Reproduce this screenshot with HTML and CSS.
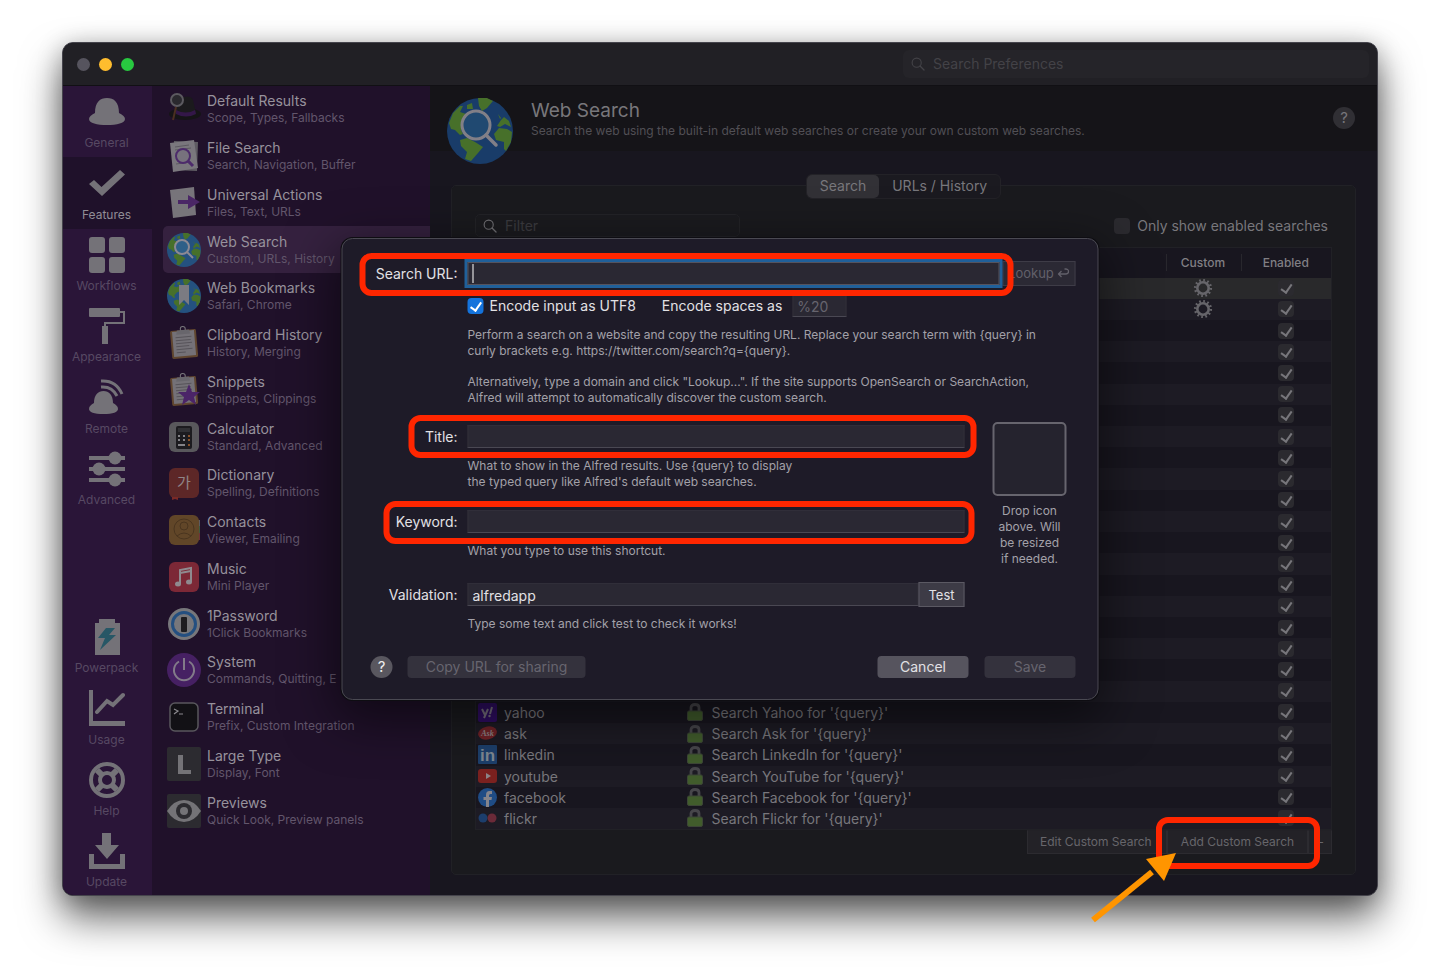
FILE: index.html
```
<!DOCTYPE html>
<html lang="en">
<head>
<meta charset="utf-8">
<meta name="viewport" content="width=device-width, initial-scale=1">
<title>Alfred Preferences</title>
<link rel="stylesheet" href="styles.css">
</head>
<body>
<svg class="sprite" aria-hidden="true">
  <symbol id="globe" viewBox="0 0 66 66">
    <circle cx="33" cy="33" r="33" fill="currentColor"/>
    <g class="land">
      <path d="M2 25 6 15l7-7 3 0-3 6 6 2 5-3 6 4-5 7-6 2-5 6 2 4-3 1-5-5-4-1z"/>
      <path d="M31 0h9l6 3-6 7-5 3-3-5zM20 7l5-2 1 6-6 0z"/>
      <path d="m13 42 7-2 8 4 8 5-5 6-7 8-6-2 2-7-6-6z"/>
      <path d="m47 36 5-6 8 1 5 3-1 10-5 9-2-2 0-7-8-2zM50 28l4-6 3-3 5 4 2 6-6-3-5 3zM51 16l3 4-1 1z"/>
    </g>
  </symbol>
  <symbol id="lens" viewBox="0 0 16 16">
    <circle cx="6.500" cy="6.500" r="5.200" fill="none" stroke="currentColor" stroke-width="1.300"/>
    <path d="m10.300 10.300 4.600 4.600" fill="none" stroke="currentColor" stroke-width="1.500" stroke-linecap="round"/>
  </symbol>
  <symbol id="gear" viewBox="0 0 20 20">
    <circle cx="10" cy="10" r="5.700" fill="none" stroke="currentColor" stroke-width="2.600"/>
    <circle cx="10" cy="10" r="7.800" fill="none" stroke="currentColor" stroke-width="2.600" stroke-dasharray="1.700 2.384"/>
  </symbol>
  <symbol id="lock" viewBox="0 0 16 18">
    <path d="M4 9V4.500q0-3 4-3t4 3V9" fill="none" stroke="#47464b" stroke-width="2.800"/>
    <rect x=".5" y="8" width="15" height="9.500" rx="1.500" fill="#415c2c" stroke="#3d4637"/>
  </symbol>
  <symbol id="clip" viewBox="0 0 34 34">
    <g transform="rotate(-5 17 17)">
      <rect x="4" y="4" width="26" height="28" rx="1.500" fill="#60462f"/>
      <rect x="6" y="5" width="22" height="25" fill="#747177"/>
      <path d="M9 11h16M9 14h15M9 17h16M9 20h13M9 23h16M9 26h9" stroke="#57545a"/>
      <circle cx="17" cy="3" r="2.500" fill="none" stroke="#77757a"/>
      <path d="M11 4h12l1 4H10z" fill="#68666c"/>
    </g>
  </symbol>
</svg>

<div class="stage">
<div class="frame">
  <div class="window">
    <header class="titlebar">
      <div class="lights"><span class="light"></span><span class="light light-min"></span><span class="light light-max"></span></div>
      <label class="pref-search"><svg><use href="#lens"/></svg><input type="search" placeholder="Search Preferences" aria-label="Search Preferences"></label>
    </header>
    <div class="body">
      <nav class="rail" aria-label="Sections">
        <div class="rail-top">
          <a href="#general"><svg viewBox="0 0 36 36"><path d="M6 19C6 8 11 4 18 4s12 4 12 15c4 2 6 4 6 6 0 4-8 6-18 6S0 29 0 25c0-2 2-4 6-6z"/></svg>General</a>
          <a href="#features" class="current"><svg viewBox="0 0 36 36"><path d="m5 15 7.500 7L31 5l5 4.500L13 31 0 19z"/></svg>Features</a>
          <a href="#workflows"><svg viewBox="0 0 36 36"><rect width="16" height="16" rx="3"/><rect x="20" width="16" height="16" rx="3"/><rect y="20" width="16" height="16" rx="3"/><rect x="20" y="20" width="16" height="16" rx="3"/></svg>Workflows</a>
          <a href="#appearance"><svg viewBox="0 0 36 36"><path d="M1 0h29q1 0 1 1v2h5v13H17v2h2v18h-6V18h2v-4h19V5h-3v3q0 1-1 1H1Q0 9 0 8V1q0-1 1-1z"/></svg>Appearance</a>
          <a href="#remote"><svg viewBox="0 0 36 36"><path d="M5 24c0-8 4-12 9.500-12S24 16 24 24c3 2 5 3 5 6 0 3-5 5-14.500 5S0 33 0 30c0-3 2-4 5-6z"/><path d="M12 8q11-1 16 9M12 2q15-1 21 13" fill="none" stroke="currentColor" stroke-width="3"/></svg>Remote</a>
          <a href="#advanced"><svg viewBox="0 0 36 36"><path d="M0 5h36v4H0zM0 16h36v4H0zM0 27h36v4H0z"/><circle cx="26" cy="7" r="6.500"/><circle cx="10" cy="18" r="6.500"/><circle cx="26" cy="29" r="6.500"/></svg>Advanced</a>
        </div>
        <div class="rail-bottom">
          <a href="#powerpack"><svg viewBox="0 0 36 36"><path d="M10 0h16v4h5v32H6V4h4z"/><path class="bolt" d="M17 9h9l-6 7h7L11 31l5-12H9z"/></svg>Powerpack</a>
          <a href="#usage"><svg viewBox="0 0 36 36"><path d="M0 0h4v31h32v5H0z"/><path d="m8 22 10-11 6 4L34 5" fill="none" stroke="currentColor" stroke-width="4" stroke-linecap="round"/></svg>Usage</a>
          <a href="#help"><svg viewBox="0 0 36 36" class="line"><circle cx="18" cy="18" r="16" stroke-width="4"/><circle cx="18" cy="18" r="7" stroke-width="4"/><path d="m8 8 5 5M28 8l-5 5M8 28l5-5M28 28l-5-5" stroke-width="6"/></svg>Help</a>
          <a href="#update"><svg viewBox="0 0 36 36"><path d="M13 0h9v12h8L18 26 6 12h7zM0 21h5v10h26V21h5v15H0z"/></svg>Update</a>
        </div>
      </nav>

      <nav class="features" aria-label="Features">
        <a href="#f1"><svg viewBox="0 0 34 34"><ellipse cx="18" cy="22" rx="16" ry="6" fill="#151417"/><path d="M9 21V9q3-6 8-4 7-2 9 3l3 13q-10 6-20 0z" fill="#1b1a1d"/><path d="M9 18q10 5 19 0l1 4q-10 5-20 0z" fill="#331748"/><circle cx="10" cy="8" r="6" fill="#2a292e" stroke="#5c5a60" stroke-width="2"/><path d="m9 15-3 13" stroke="#4b2f22" stroke-width="2"/></svg><span><b>Default Results</b><small>Scope, Types, Fallbacks</small></span></a>
        <a href="#f2"><svg viewBox="0 0 34 34"><path d="m7 2 24 1-1 29-24-1z" fill="#5f5c63"/><path d="m3 4 24-3 4 28-25 4z" fill="#7a777d"/><path d="m8 8 14-2M8 11l16-2M9 25l15-2" stroke="#5c5960"/><circle cx="16" cy="17" r="7" fill="#77727d" stroke="#4d2b6b" stroke-width="2"/><path d="m21 22 5 5" stroke="#4d2b6b" stroke-width="3"/></svg><span><b>File Search</b><small>Search, Navigation, Buffer</small></span></a>
        <a href="#f3"><svg viewBox="0 0 34 34"><path d="m3 4 24-3 2 28-23 3z" fill="#77747a"/><path d="M11 14h10V9l12 7-12 7v-5H11z" fill="#4a2666"/></svg><span><b>Universal Actions</b><small>Files, Text, URLs</small></span></a>
        <a href="#f4" class="current"><svg class="globe" viewBox="0 0 34 34"><use href="#globe" width="34" height="34"/><circle cx="15" cy="14" r="7" class="lens-glass"/><path d="m20 19 6 6" stroke="#8c8993" stroke-width="2"/></svg><span><b>Web Search</b><small>Custom, URLs, History</small></span></a>
        <a href="#f5"><svg class="globe" viewBox="0 0 34 34"><use href="#globe" width="34" height="34"/><path d="M12 6h10v20l-5-5-5 5z" fill="#7b7b82"/></svg><span><b>Web Bookmarks</b><small>Safari, Chrome</small></span></a>
        <a href="#f6"><svg viewBox="0 0 34 34"><use href="#clip"/></svg><span><b>Clipboard History</b><small>History, Merging</small></span></a>
        <a href="#f7"><svg viewBox="0 0 34 34"><use href="#clip"/><path d="m22 11 3 8h8l-6 5 2 8-7-5-7 5 2-8-6-5h8z" fill="#4b2468"/></svg><span><b>Snippets</b><small>Snippets, Clippings</small></span></a>
        <a href="#f8"><svg viewBox="0 0 34 34"><rect x="2" y="2" width="30" height="30" rx="6" fill="#59585c"/><rect x="9" y="6" width="16" height="23" rx="2" fill="#1c1b1f"/><path d="M11 8h12v4H11z" fill="#303034"/><path d="M11 16h2M16 16h2M11 20h2M16 20h2M11 25h7" stroke="#838287" stroke-width="2"/><path d="M21 16h2M21 20h2M21 25h2" stroke="#8a5128" stroke-width="2"/></svg><span><b>Calculator</b><small>Standard, Advanced</small></span></a>
        <a href="#f9"><svg viewBox="0 0 34 34"><rect x="2" y="2" width="30" height="30" rx="6" fill="#5d2727"/><path d="M5 31h6v3l-3-1-3 1z" fill="#7a2926"/><text x="17" y="22" text-anchor="middle" class="hangul">가</text></svg><span><b>Dictionary</b><small>Spelling, Definitions</small></span></a>
        <a href="#f10"><svg viewBox="0 0 34 34"><path d="M30 7h3v6h-3z" fill="#5c5b62"/><path d="M30 13h3v7h-3z" fill="#3d5a40"/><path d="M30 20h3v7h-3z" fill="#703238"/><rect x="2" y="2" width="30" height="30" rx="6" fill="#614628"/><g fill="none" stroke="#4a351f"><circle cx="17" cy="16" r="10"/><circle cx="17" cy="13" r="4"/><path d="M10 23q7-6 14 0"/></g></svg><span><b>Contacts</b><small>Viewer, Emailing</small></span></a>
        <a href="#f11"><svg viewBox="0 0 34 34"><rect x="2" y="2" width="30" height="30" rx="6" fill="#7c2836"/><path d="M13 24V10l11-2v14M13 13l11-2" fill="none" stroke="#8f8a8f" stroke-width="2"/><ellipse cx="11" cy="24" rx="3" ry="2.500" fill="#8f8a8f"/><ellipse cx="22" cy="22" rx="3" ry="2.500" fill="#8f8a8f"/></svg><span><b>Music</b><small>Mini Player</small></span></a>
        <a href="#f12"><svg viewBox="0 0 34 34"><circle cx="17" cy="17" r="16" fill="#77777b"/><circle cx="17" cy="17" r="11.500" fill="#77777b" stroke="#244f80" stroke-width="3"/><rect x="14" y="10" width="6" height="15" rx="1" fill="#1d1c20"/></svg><span><b>1Password</b><small>1Click Bookmarks</small></span></a>
        <a href="#f13"><svg viewBox="0 0 34 34"><circle cx="17" cy="17" r="17" fill="#462063"/><path d="M12 8.500A10 10 0 1 0 22 8.500M17 5v12" fill="none" stroke="#827a89" stroke-width="2"/></svg><span><b>System</b><small>Commands, Quitting, E</small></span></a>
        <a href="#f14"><svg viewBox="0 0 34 34"><rect x="3" y="3" width="28" height="28" rx="5" fill="#121115" stroke="#59575d" stroke-width="1.500"/><path d="m7 9 4 2-4 3M12 14h4" fill="none" stroke="#8a888d" stroke-width="1.200"/></svg><span><b>Terminal</b><small>Prefix, Custom Integration</small></span></a>
        <a href="#f15"><svg viewBox="0 0 34 34"><rect width="34" height="34" rx="2" fill="#2c2b30"/><path d="M11 8h5v15h8v4H11z" fill="#747377"/></svg><span><b>Large Type</b><small>Display, Font</small></span></a>
        <a href="#f16"><svg viewBox="0 0 34 34"><rect width="34" height="34" rx="2" fill="#2c2b30"/><path d="M0 17Q7 6 17 6t17 11Q27 28 17 28T0 17z" fill="#747377"/><circle cx="17" cy="17" r="8" fill="#2c2b30"/><circle cx="17" cy="17" r="4" fill="#747377"/></svg><span><b>Previews</b><small>Quick Look, Preview panels</small></span></a>
      </nav>

      <main class="main">
        <header class="head">
          <svg class="globe big" viewBox="0 0 66 66"><use href="#globe"/><circle cx="29" cy="27" r="14" class="lens-glass"/><path d="m39 37 10 10" stroke="#817f87" stroke-width="3.500" stroke-linecap="round"/></svg>
          <div class="head-text"><h1>Web Search</h1><p>Search the web using the built-in default web searches or create your own custom web searches.</p></div>
          <button class="round dim" type="button">?</button>
        </header>
        <div class="tabs" role="tablist"><button role="tab" type="button" aria-selected="true">Search</button><button role="tab" type="button" aria-selected="false">URLs / History</button></div>
        <section class="box">
          <div class="tools">
            <label class="filter"><svg><use href="#lens"/></svg><input type="search" placeholder="Filter" aria-label="Filter"></label>
            <label class="only"><input type="checkbox" class="tick muted">Only show enabled searches</label>
          </div>
          <table>
            <colgroup><col class="c-key"><col><col class="c-custom"><col class="c-on"></colgroup>
            <thead><tr><th></th><th></th><th>Custom</th><th>Enabled</th></tr></thead>
            <tbody>
              <tr class="chosen"><td></td><td></td><td><svg class="gear"><use href="#gear"/></svg></td><td><input type="checkbox" class="tick muted" aria-label="Enabled" checked></td></tr>
              <tr><td></td><td></td><td><svg class="gear"><use href="#gear"/></svg></td><td><input type="checkbox" class="tick muted" aria-label="Enabled" checked></td></tr>
              <tr><td></td><td></td><td></td><td><input type="checkbox" class="tick muted" aria-label="Enabled" checked></td></tr>
              <tr><td></td><td></td><td></td><td><input type="checkbox" class="tick muted" aria-label="Enabled" checked></td></tr>
              <tr><td></td><td></td><td></td><td><input type="checkbox" class="tick muted" aria-label="Enabled" checked></td></tr>
              <tr><td></td><td></td><td></td><td><input type="checkbox" class="tick muted" aria-label="Enabled" checked></td></tr>
              <tr><td></td><td></td><td></td><td><input type="checkbox" class="tick muted" aria-label="Enabled" checked></td></tr>
              <tr><td></td><td></td><td></td><td><input type="checkbox" class="tick muted" aria-label="Enabled" checked></td></tr>
              <tr><td></td><td></td><td></td><td><input type="checkbox" class="tick muted" aria-label="Enabled" checked></td></tr>
              <tr><td></td><td></td><td></td><td><input type="checkbox" class="tick muted" aria-label="Enabled" checked></td></tr>
              <tr><td></td><td></td><td></td><td><input type="checkbox" class="tick muted" aria-label="Enabled" checked></td></tr>
              <tr><td></td><td></td><td></td><td><input type="checkbox" class="tick muted" aria-label="Enabled" checked></td></tr>
              <tr><td></td><td></td><td></td><td><input type="checkbox" class="tick muted" aria-label="Enabled" checked></td></tr>
              <tr><td></td><td></td><td></td><td><input type="checkbox" class="tick muted" aria-label="Enabled" checked></td></tr>
              <tr><td></td><td></td><td></td><td><input type="checkbox" class="tick muted" aria-label="Enabled" checked></td></tr>
              <tr><td></td><td></td><td></td><td><input type="checkbox" class="tick muted" aria-label="Enabled" checked></td></tr>
              <tr><td></td><td></td><td></td><td><input type="checkbox" class="tick muted" aria-label="Enabled" checked></td></tr>
              <tr><td></td><td></td><td></td><td><input type="checkbox" class="tick muted" aria-label="Enabled" checked></td></tr>
              <tr><td></td><td></td><td></td><td><input type="checkbox" class="tick muted" aria-label="Enabled" checked></td></tr>
              <tr><td></td><td></td><td></td><td><input type="checkbox" class="tick muted" aria-label="Enabled" checked></td></tr>
              <tr><td><div class="cell"><svg viewBox="0 0 19 19"><rect width="19" height="19" rx="2" fill="#2f0d63"/><path d="m4 6 3 6M10 6l-4 9M14 4l-2 7" stroke="#77727f" stroke-width="2"/><circle cx="11.500" cy="13" r="1.200" fill="#77727f"/></svg>yahoo</div></td><td><div class="cell"><svg class="lock"><use href="#lock"/></svg>Search Yahoo for '{query}'</div></td><td></td><td><input type="checkbox" class="tick muted" aria-label="Enabled" checked></td></tr>
              <tr><td><div class="cell"><svg viewBox="0 0 19 19"><ellipse cx="9.500" cy="9" rx="9.500" ry="6.500" transform="rotate(-12 9.500 9)" fill="#702227"/><text x="9.500" y="12" text-anchor="middle" class="ask">Ask</text></svg>ask</div></td><td><div class="cell"><svg class="lock"><use href="#lock"/></svg>Search Ask for '{query}'</div></td><td></td><td><input type="checkbox" class="tick muted" aria-label="Enabled" checked></td></tr>
              <tr><td><div class="cell"><svg viewBox="0 0 19 19"><rect width="19" height="19" rx="1" fill="#1d3f6b"/><text x="9.500" y="16" text-anchor="middle" class="in">in</text></svg>linkedin</div></td><td><div class="cell"><svg class="lock"><use href="#lock"/></svg>Search LinkedIn for '{query}'</div></td><td></td><td><input type="checkbox" class="tick muted" aria-label="Enabled" checked></td></tr>
              <tr><td><div class="cell"><svg viewBox="0 0 19 19"><rect y="2" width="19" height="14" rx="3" fill="#7b211f"/><path d="m8 6 5 3-5 3z" fill="#8d8588"/></svg>youtube</div></td><td><div class="cell"><svg class="lock"><use href="#lock"/></svg>Search YouTube for '{query}'</div></td><td></td><td><input type="checkbox" class="tick muted" aria-label="Enabled" checked></td></tr>
              <tr><td><div class="cell"><svg viewBox="0 0 19 19"><circle cx="9.500" cy="9.500" r="9.500" fill="#1f4c85"/><path d="M8 19v-7H5.500V9H8V7q0-4 3.500-4H14v3h-1.500Q11 6 11 7.500V9h3l-.5 3H11v7z" fill="#85848b"/></svg>facebook</div></td><td><div class="cell"><svg class="lock"><use href="#lock"/></svg>Search Facebook for '{query}'</div></td><td></td><td><input type="checkbox" class="tick muted" aria-label="Enabled" checked></td></tr>
              <tr><td><div class="cell"><svg viewBox="0 0 19 19"><circle cx="5" cy="9" r="4.500" fill="#1c3e6d"/><circle cx="14" cy="9" r="4.500" fill="#6b2a38"/></svg>flickr</div></td><td><div class="cell"><svg class="lock"><use href="#lock"/></svg>Search Flickr for '{query}'</div></td><td></td><td><input type="checkbox" class="tick muted" aria-label="Enabled" checked></td></tr>
            </tbody>
          </table>
          <div class="actions"><button type="button" class="edit">Edit Custom Search</button><button type="button" class="add">Add Custom Search</button><button type="button" class="minus">–</button></div>
        </section>
      </main>
    </div>
  </div>

  <form class="modal" role="dialog" aria-label="Custom search">
    <div class="row">
      <label for="url">Search URL:</label>
      <div class="url-line"><div class="url-field"><input id="url" class="field" type="text"><span class="caret"></span></div><button type="button" class="square off">Lookup <svg viewBox="0 0 12 10"><path d="M4 3 1 6l3 3M1 6h7q3 0 3-2.500T8 1H7" fill="none" stroke="currentColor" stroke-width="1.300"/></svg></button></div>
    </div>
    <div class="indent options">
      <label class="utf"><input type="checkbox" class="tick" checked>Encode input as UTF8</label>
      <label for="spaces">Encode spaces as</label><input id="spaces" class="field spaces" type="text" placeholder="%20">
    </div>
    <div class="indent hint">
      <p>Perform a search on a website and copy the resulting URL. Replace your search term with {query} in<br>curly brackets e.g. https://twitter.com/search?q={query}.</p>
      <p>Alternatively, type a domain and click "Lookup...". If the site supports OpenSearch or SearchAction,<br>Alfred will attempt to automatically discover the custom search.</p>
    </div>
    <div class="split">
      <div class="fields">
        <div class="row"><label for="title">Title:</label><input id="title" class="field" type="text"></div>
        <p class="indent hint">What to show in the Alfred results. Use {query} to display<br>the typed query like Alfred's default web searches.</p>
        <div class="row keyword"><label for="keyword">Keyword:</label><input id="keyword" class="field" type="text"></div>
        <p class="indent hint">What you type to use this shortcut.</p>
        <div class="row validation"><label for="valid">Validation:</label><div class="test-line"><input id="valid" class="field" type="text" value="alfredapp"><button type="button" class="square">Test</button></div></div>
        <p class="indent hint">Type some text and click test to check it works!</p>
      </div>
      <div class="drop"><div class="well"></div><p class="hint">Drop icon<br>above. Will<br>be resized<br>if needed.</p></div>
    </div>
    <footer class="foot">
      <button type="button" class="round">?</button>
      <button type="button" class="push off share">Copy URL for sharing</button>
      <button type="button" class="push cancel">Cancel</button>
      <button type="button" class="push off">Save</button>
    </footer>
    <span class="mark mark-url"></span><span class="mark mark-title"></span><span class="mark mark-keyword"></span>
  </form>

  <span class="mark mark-add"></span>
  <svg class="arrow" viewBox="0 0 88 72"><path d="M3 68 62 20" stroke="#ff9500" stroke-width="6"/><path d="M86 1 56 7l18 22z" fill="#ff9500"/></svg>
</div>
</div>
</body>
</html>
```
FILE: styles.css
```
* { box-sizing: border-box; }
body { margin: 0; background: #fff; font: 14px/18px Inter, "Liberation Sans", sans-serif; color: #78777c; overflow-x: hidden; }
h1, p { margin: 0; font-weight: 400; }
a { color: inherit; text-decoration: none; }
button, input { font: inherit; color: inherit; margin: 0; padding: 0; border: 0; background: none; outline: 0; }
input::placeholder { color: inherit; opacity: 1; }
.sprite { display: none; }

.stage { padding: 42px 62px 83px; overflow: hidden; }
.frame { position: relative; }
.window {
  overflow: hidden; border: 1px solid #45444c; border-radius: 11px; background: #18161f;
  box-shadow: 0 22px 40px rgba(0,0,0,.6), 0 4px 24px rgba(0,0,0,.25);
}

.titlebar { display: flex; align-items: center; justify-content: space-between; height: 43px; padding: 0 8px 0 14px; background: #212025; border-bottom: 1px solid #111014; }
.lights { display: flex; gap: 9px; }
.light { width: 13px; height: 13px; border-radius: 50%; background: #56545e; }
.light-min { background: #ffbd2e; }
.light-max { background: #28c840; }
.pref-search { display: flex; align-items: center; gap: 8px; width: 466px; height: 28px; padding: 0 8px; border-radius: 6px; background: #252429; color: #434247; }
.pref-search svg { width: 14px; height: 14px; }
.pref-search input { flex: 1; }

.body { display: flex; background: linear-gradient(90deg, #20112a 367px, #18161f 367px); }
.rail { display: flex; flex-direction: column; justify-content: space-between; flex: 0 0 89px; background: #2a1538; color: #574963; font-size: 12px; line-height: 16px; }
.rail-top, .rail-bottom { display: grid; grid-auto-rows: 1fr; }
.rail-top { height: 428px; }
.rail-bottom { height: 285px; }
.rail a { display: flex; flex-direction: column; align-items: center; justify-content: space-between; padding: 8px 2px 6px 0; }
.rail-bottom a { padding: 9px 2px 5px 0; }
.rail svg { width: 36px; height: 36px; fill: currentColor; color: #747278; }
.rail .line { fill: none; stroke: currentColor; }
.rail .bolt { fill: #275766; }
.rail .current { background: #1f112a; color: #918d96; }

.features { display: grid; grid-template-rows: repeat(16, 1fr); flex: 0 0 278px; min-width: 0; height: 748px; padding-left: 11px; color: #97929c; }
.features a { display: flex; align-items: center; gap: 6px; min-width: 0; padding-left: 4px; border-radius: 5px 0 0 5px; white-space: nowrap; overflow: hidden; }
.features .current { background: #35213f; }
.features svg { flex: 0 0 34px; height: 34px; }
.features b, .features small { display: block; font-weight: 400; }
.features b { font-size: 14px; line-height: 18px; }
.features small { font-size: 12px; line-height: 16px; color: #62566c; }
.globe { color: #24517f; }
.land { fill: #47702a; }
.lens-glass { fill: #2e5f88; stroke: #8c8993; stroke-width: 2; }
.hangul { font: 15px "Noto Sans CJK KR", sans-serif; fill: #8f8588; }

.main { flex: 1; min-width: 0; padding-bottom: 20px; }
.head { display: flex; align-items: flex-start; height: 65px; padding: 12px 22px 0 17px; background: #151418; }
.big { flex: 0 0 66px; height: 66px; color: #193c69; }
.big .lens-glass { fill: #204971; stroke: #817f87; stroke-width: 3; }
.head h1 { font-size: 19px; line-height: 24px; color: #78777b; }
.head-text { flex: 1; padding: 1px 0 0 18px; }
.head-text p { font-size: 12px; line-height: 16px; color: #514f55; }
.round { width: 22px; height: 22px; border-radius: 50%; background: #59575f; color: #eee; font-size: 15px; line-height: 22px; text-align: center; }
.round.dim { margin-top: 9px; background: #302f34; color: #77767b; }

.tabs { position: relative; display: flex; width: fit-content; margin: 23px auto -14px; border: 1px solid #232227; border-radius: 6px; background: #1b1a20; }
.tabs button { height: 23px; padding: 0 13px 1px; border-radius: 5px; }
.tabs [aria-selected="true"] { background: #323136; }

.box { margin: 0 21px; padding: 28px 23px 20px; border: 1px solid #212126; border-radius: 5px; background: #1a1a1e; }
.tools { display: flex; justify-content: space-between; align-items: center; height: 23px; margin-bottom: 10px; }
.filter { display: flex; align-items: center; gap: 8px; width: 265px; height: 23px; padding: 0 7px; border: 1px solid #232327; border-radius: 5px; background: #1b1b1f; color: #3c3b40; }
.filter svg { width: 14px; height: 14px; color: #717075; }
.filter input { flex: 1; min-width: 0; }
.only { display: flex; align-items: center; gap: 7px; padding-right: 4px; }
.tick { appearance: none; position: relative; flex: none; width: 16px; height: 16px; border-radius: 4px; background: #1473dc; color: #fff; }
.tick:checked::after { content: ""; position: absolute; left: 5px; top: 2px; width: 5px; height: 9px; border: solid currentColor; border-width: 0 2px 2px 0; transform: rotate(35deg); }
.tick.muted { background: #2b2a2f; color: #77767b; }

table { width: 100%; height: 583px; table-layout: fixed; border-collapse: collapse; border: 1px solid #212126; background: #18161f; }
.c-key { width: 209px; }
.c-custom { width: 75px; }
.c-on { width: 91px; }
th, td { padding: 0; }
thead tr { height: 30px; }
tbody tr { height: 21px; }
th { font-size: 12px; font-weight: 500; line-height: 16px; color: #807f84; background: linear-gradient(#28272d, #28272d) left center / 1px 17px no-repeat; }
th:nth-child(-n+2) { background: none; }
td { line-height: 19px; text-align: center; }
tbody tr:nth-child(even) { background: #1d1b24; }
tbody .chosen { background: #29292b; }
td .tick, td svg { display: block; margin: 0 auto; }
.gear { width: 20px; height: 20px; color: #66656a; }
.cell { display: flex; align-items: center; gap: 7px; padding-left: 2px; white-space: nowrap; }
.cell svg { flex: none; width: 19px; height: 19px; margin: 0; }
.cell .lock { width: 16px; height: 18px; margin-right: 2px; }
.ask { font: italic bold 8px "Liberation Serif", serif; fill: #8d8588; }
.in { font: bold 17px "Liberation Sans", sans-serif; fill: #7e8790; }

.actions { display: flex; justify-content: flex-end; font-size: 12px; color: #67666b; }
.actions button { height: 24px; border: 1px solid #2c2b30; border-top-color: #222126; background: #232227; }
.actions .edit { padding: 0 12px; width: 140px; text-align: left; white-space: nowrap; }
.actions .add { width: 141px; }
.actions .minus { width: 24px; }

.modal {
  position: absolute; top: 196px; left: 50%; width: 757px; transform: translateX(-50%);
  padding: 21px 22px 21px 24px; border: 1px solid #4a4952; border-radius: 11px; background: #1e1b28; color: #e2e1e5;
  box-shadow: 0 0 0 1px #0e0d12, 0 14px 50px 6px rgba(0,0,0,.5);
}
.row { display: grid; grid-template-columns: 91px 1fr; column-gap: 10px; align-items: center; }
.row > label { padding-top: 1px; text-align: right; white-space: nowrap; }
.indent { padding-left: 101px; }
.field { display: block; width: 100%; height: 23px; padding: 2px 4px 0; background: #2a2833; border: 1px solid #302e39; border-bottom-color: #4a4853; }
.url-line { display: flex; align-items: center; gap: 3px; height: 26px; }
.url-field { position: relative; flex: 1; }
.url-field .field { border-color: #55535e; box-shadow: 0 0 0 3px #20609a; }
.caret { position: absolute; left: 5px; top: 2px; width: 1px; height: 19px; background: #fff; }
.square { height: 25px; border: 1px solid #5b5963; background: #3d3b46; font-size: 13px; }
.square.off { width: 73px; border-color: #3e3c47; background: #2b2934; color: #62606a; text-align: right; padding-right: 5px; white-space: nowrap; }
.square svg { width: 12px; height: 10px; }
.options { display: flex; align-items: center; height: 22px; margin-top: 9px; white-space: nowrap; }
.utf { display: flex; align-items: center; gap: 6px; margin-right: 26px; }
.field.spaces { width: 54px; height: 22px; margin-left: 10px; padding-top: 0; color: #66646e; }
.hint { font-size: 12px; line-height: 16px; color: #a3a1a9; white-space: nowrap; }
.hint p + p { margin-top: 15px; }
.options + .hint { margin-top: 10px; }
.split { display: flex; justify-content: space-between; margin-top: 16px; }
.fields { width: 598px; padding-top: 3px; }
.fields .hint { margin-top: 10px; }
.keyword { margin-top: 20px; }
.validation { margin-top: 24px; }
.test-line { display: flex; align-items: center; height: 23px; }
.test-line .square { flex: 0 0 46px; color: #e2e1e5; }
.drop { width: 74px; margin-right: 9px; text-align: center; }
.well { height: 74px; margin-bottom: 7px; border: 2px solid #67656e; border-radius: 5px; background: #25232e; }
.foot { display: flex; align-items: center; margin-top: 24px; }
.foot .round { margin-left: 4px; }
.push { width: 91px; height: 22px; border-radius: 4px; background: #56545e; line-height: 22px; }
.push.off { background: #34323d; color: #67656f; }
.foot .share { width: 178px; margin: 0 auto 0 15px; }
.cancel { margin-right: 16px; }

.mark { position: absolute; border: 6px solid #ff2600; border-radius: 12px; pointer-events: none; }
.mark-url { left: 17px; top: 14px; right: 84px; height: 43px; }
.mark-title { left: 66px; top: 176px; right: 121px; height: 43px; }
.mark-keyword { left: 41px; top: 262px; right: 123px; height: 43px; }
.mark-add { right: 58px; bottom: 27px; width: 164px; height: 52px; }
.arrow { position: absolute; right: 200px; bottom: -28px; width: 88px; height: 72px; }
```
